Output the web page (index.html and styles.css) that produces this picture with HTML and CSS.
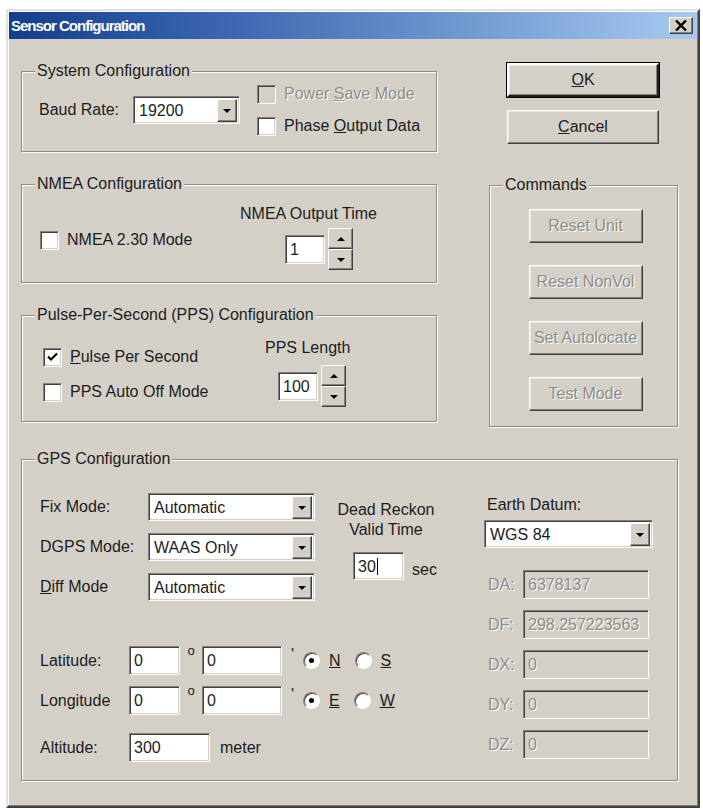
FILE: index.html
```html
<!DOCTYPE html>
<html lang="en">
<head>
    <meta charset="UTF-8">
    <meta name="viewport" content="width=device-width, initial-scale=1.0">
    <title>Sensor Configuration</title>
    <link rel="stylesheet" href="styles.css">
</head>
<body>
    <div class="window">
        <div class="titlebar">
            <span class="title">Sensor Configuration</span>
            <span class="close">
                <svg width="12" height="11" viewBox="0 0 12 11"><path d="M1 0.5 L11 10.5 M11 0.5 L1 10.5" stroke="#000" stroke-width="2.4"/></svg>
            </span>
        </div>

        <div class="client">
            <div class="top">
                <div class="left-col">
                    <fieldset class="group sys">
                        <legend>System Configuration</legend>
                        <div class="sys-row">
                            <span class="lbl baud-lbl">Baud Rate:</span>
                            <div class="combo baud"><span class="val">19200</span><span class="drop"><i></i></span></div>
                            <div class="checks">
                                <div class="check disabled"><span class="box"></span><span>Power <u>S</u>ave Mode</span></div>
                                <div class="check"><span class="box"></span><span>Phase <u>O</u>utput Data</span></div>
                            </div>
                        </div>
                    </fieldset>

                    <fieldset class="group nmea">
                        <legend>NMEA Configuration</legend>
                        <div class="nmea-row">
                            <div class="check nmea-check"><span class="box"></span><span>NMEA 2.30 Mode</span></div>
                            <div class="spin-block nmea-spin">
                                <span class="lbl">NMEA Output Time</span>
                                <div class="spinner">
                                    <div class="edit small">1</div>
                                    <div class="updown"><span class="up"><i></i></span><span class="down"><i></i></span></div>
                                </div>
                            </div>
                        </div>
                    </fieldset>

                    <fieldset class="group pps">
                        <legend>Pulse-Per-Second (PPS) Configuration</legend>
                        <div class="pps-row">
                            <div class="pps-checks">
                                <div class="check"><span class="box checked">
                                    <svg width="11" height="10" viewBox="0 0 11 10"><path d="M1 4.5 L4 7.5 L10 1.5" fill="none" stroke="#000" stroke-width="2.2"/></svg>
                                </span><span><u>P</u>ulse Per Second</span></div>
                                <div class="check"><span class="box"></span><span>PPS Auto Off Mode</span></div>
                            </div>
                            <div class="spin-block pps-spin">
                                <span class="lbl">PPS Length</span>
                                <div class="spinner">
                                    <div class="edit small">100</div>
                                    <div class="updown"><span class="up"><i></i></span><span class="down"><i></i></span></div>
                                </div>
                            </div>
                        </div>
                    </fieldset>
                </div>

                <div class="right-col">
                    <button class="btn default"><u>O</u>K</button>
                    <button class="btn cancel"><u>C</u>ancel</button>
                    <fieldset class="group commands">
                        <legend>Commands</legend>
                        <div class="cmd-list">
                            <button class="btn cmd" disabled>Reset Unit</button>
                            <button class="btn cmd" disabled>Reset NonVol</button>
                            <button class="btn cmd" disabled>Set Autolocate</button>
                            <button class="btn cmd" disabled>Test Mode</button>
                        </div>
                    </fieldset>
                </div>
            </div>

            <fieldset class="group gps">
                <legend>GPS Configuration</legend>
                <div class="gps-body">
                    <div class="gps-left">
                        <div class="modes">
                            <div class="mode-grid">
                                <span class="lbl">Fix Mode:</span>
                                <div class="combo wide"><span class="val">Automatic</span><span class="drop"><i></i></span></div>
                                <span class="lbl">DGPS Mode:</span>
                                <div class="combo wide"><span class="val">WAAS Only</span><span class="drop"><i></i></span></div>
                                <span class="lbl"><u>D</u>iff Mode</span>
                                <div class="combo wide"><span class="val">Automatic</span><span class="drop"><i></i></span></div>
                            </div>
                            <div class="dead-reckon">
                                <span class="lbl">Dead Reckon<br>Valid Time</span>
                                <div class="dr-row">
                                    <div class="edit dr">30<span class="caret"></span></div>
                                    <span class="lbl sec">sec</span>
                                </div>
                            </div>
                        </div>

                        <div class="coords">
                            <div class="coord-row">
                                <span class="lbl coord-lbl">Latitude:</span>
                                <div class="edit deg">0</div>
                                <span class="mark degree">o</span>
                                <div class="edit min">0</div>
                                <span class="mark minute">'</span>
                                <span class="radio on"></span><span class="lbl rlbl"><u>N</u></span>
                                <span class="radio"></span><span class="lbl rlbl"><u>S</u></span>
                            </div>
                            <div class="coord-row">
                                <span class="lbl coord-lbl">Longitude</span>
                                <div class="edit deg">0</div>
                                <span class="mark degree">o</span>
                                <div class="edit min">0</div>
                                <span class="mark minute">'</span>
                                <span class="radio on"></span><span class="lbl rlbl"><u>E</u></span>
                                <span class="radio"></span><span class="lbl rlbl"><u>W</u></span>
                            </div>
                            <div class="coord-row alt-row">
                                <span class="lbl coord-lbl">Altitude:</span>
                                <div class="edit alt">300</div>
                                <span class="lbl meter">meter</span>
                            </div>
                        </div>
                    </div>

                    <div class="gps-right">
                        <span class="lbl datum-lbl">Earth Datum:</span>
                        <div class="combo datum"><span class="val">WGS 84</span><span class="drop"><i></i></span></div>
                        <div class="datum-rows">
                            <div class="drow"><span class="lbl off">DA:</span><div class="edit ro">6378137</div></div>
                            <div class="drow"><span class="lbl off">DF:</span><div class="edit ro">298.257223563</div></div>
                            <div class="drow"><span class="lbl off">DX:</span><div class="edit ro">0</div></div>
                            <div class="drow"><span class="lbl off">DY:</span><div class="edit ro">0</div></div>
                            <div class="drow"><span class="lbl off">DZ:</span><div class="edit ro">0</div></div>
                        </div>
                    </div>
                </div>
            </fieldset>
        </div>
    </div>
</body>
</html>
```

FILE: styles.css
```css
* { box-sizing: border-box; }
body { margin: 0; background: #fff; font-family: "Liberation Sans", Arial, sans-serif; font-size: 16px; color: #1c1c1c; }

/* window frame */
.window { margin: 9px 0 0 6px; width: 694px; height: 799px; background: #d4d0c8; padding: 1px;
    border: 2px solid; border-color: #e4e2dc #404040 #404040 #e4e2dc; box-shadow: inset -1px -1px 0 #808080, inset 1px 1px 0 #fff; }
.titlebar { height: 27px; display: flex; align-items: center; justify-content: space-between; padding: 0 4px 0 2px;
    background: linear-gradient(to right, #123e8c 0%, #3f6cb4 35%, #a6caf0 100%); }
.title { color: #fff; font-weight: bold; font-size: 15px; letter-spacing: -1px; }
.close { width: 24px; height: 17px; display: flex; align-items: center; justify-content: center; background: #d4d0c8;
    border: 1px solid; border-color: #fff #404040 #404040 #fff; box-shadow: inset -1px -1px 0 #808080; }

.client { padding: 24px 19px 0 12px; }
.top { display: flex; gap: 52px; }
.left-col { width: 416px; display: flex; flex-direction: column; gap: 24px; }
.right-col { width: 189px; display: flex; flex-direction: column; }

/* group boxes */
.group { margin: 0; padding: 0; min-width: 0; border: 1px solid #8c8a86; box-shadow: inset 1px 1px 0 #fff, 1px 1px 0 #fff; }
.group legend { margin-left: 13px; padding: 0 2px; line-height: 16px; background: #d4d0c8; }
.sys { height: 89px; }
.nmea { height: 107px; }
.pps { height: 115px; }
.commands { height: 250px; margin-top: 33px; }
.gps { height: 330px; margin-top: 24px; }

.lbl { white-space: nowrap; }
.off, .disabled { color: #8e8c88; text-shadow: 1px 1px 0 #fff; }

/* sunken field */
.edit, .combo { background: #fff; height: 29px; border: 1px solid; border-color: #808080 #fff #fff #808080;
    box-shadow: inset 1px 1px 0 #404040, inset -1px -1px 0 #d4d0c8; padding: 2px 4px; line-height: 23px; white-space: nowrap; overflow: hidden; }
.edit.ro { background: #d4d0c8; color: #8e8c88; text-shadow: 1px 1px 0 #fff; }

.combo { display: flex; justify-content: space-between; padding: 2px 2px 2px 5px; }
.drop { width: 20px; height: 23px; background: #d4d0c8; border: 1px solid; border-color: #fff #404040 #404040 #fff;
    box-shadow: inset -1px -1px 0 #808080; display: flex; align-items: center; justify-content: center; }
.drop i, .updown i { width: 0; height: 0; border-left: 4px solid transparent; border-right: 4px solid transparent; border-top: 4px solid #000; }

/* buttons */
.btn { font: inherit; color: #1c1c1c; background: #d4d0c8; height: 34px; border: 1px solid; border-color: #fff #404040 #404040 #fff;
    box-shadow: inset -1px -1px 0 #808080, inset 1px 1px 0 #e8e6e0; padding: 0; }
.btn.default { outline: 1px solid #000; outline-offset: 0; border-width: 2px; border-color: #fff #202020 #202020 #fff; }
.right-col .default, .right-col .cancel { width: 152px; margin-left: 18px; }
.cancel { margin-top: 13px; }
.btn:disabled { color: #8e8c88; text-shadow: 1px 1px 0 #fff; }
.cmd-list { display: flex; flex-direction: column; align-items: center; gap: 22px; padding: 16px 0 0 4px; }
.cmd { width: 114px; }

/* checkboxes and radios */
.check { display: flex; align-items: center; gap: 8px; height: 20px; white-space: nowrap; }
.box { width: 19px; height: 19px; flex: none; background: #fff; border: 1px solid; border-color: #808080 #fff #fff #808080;
    box-shadow: inset 1px 1px 0 #404040, inset -1px -1px 0 #d4d0c8; display: flex; align-items: center; justify-content: center; }
.disabled .box { background: #d4d0c8; }
.radio { width: 17px; height: 17px; flex: none; border-radius: 50%; background: #fff; border: 1px solid; border-color: #808080 #fff #fff #808080;
    box-shadow: inset 1px 1px 0 #404040; display: flex; align-items: center; justify-content: center; }
.radio.on::after { content: ""; width: 5px; height: 5px; border-radius: 50%; background: #000; }

/* system */
.sys-row { display: flex; align-items: center; padding: 0 0 0 17px; height: 62px; }
.baud-lbl { width: 94px; }
.baud { width: 107px; height: 28px; }
.checks { display: flex; flex-direction: column; gap: 12px; margin-left: 17px; }

/* spinners */
.spin-block { display: flex; flex-direction: column; }
.spin-block .lbl { line-height: 18px; }
.spinner { display: flex; align-items: center; gap: 3px; }
.edit.small { width: 40px; }
.updown { width: 25px; height: 42px; display: flex; flex-direction: column; }
.updown span { flex: 1; background: #d4d0c8; border: 1px solid; border-color: #fff #404040 #404040 #fff;
    box-shadow: inset -1px -1px 0 #808080; display: flex; align-items: center; justify-content: center; }
.updown .up i { border-top: 0; border-bottom: 4px solid #000; }

/* nmea */
.nmea-row { display: flex; padding-left: 18px; }
.nmea-check { width: 200px; margin-top: 38px; }
.nmea-spin { padding-top: 13px; }
.nmea-spin .spinner { margin: 5px 0 0 45px; }

/* pps */
.pps-row { display: flex; padding-left: 21px; }
.pps-checks { width: 222px; display: flex; flex-direction: column; gap: 15px; padding-top: 24px; }
.pps-spin { padding-top: 16px; }
.pps-spin .spinner { margin: 8px 0 0 13px; }

/* gps */
.gps-body { display: flex; padding-left: 18px; }
.gps-left { width: 444px; }
.modes { display: flex; padding-top: 26px; }
.mode-grid { display: grid; grid-template-columns: 108px 167px; row-gap: 12px; align-items: center; }
.combo.wide { height: 28px; }
.dead-reckon { width: 102px; margin-left: 20px; padding-top: 7px; display: flex; flex-direction: column; }
.dead-reckon > .lbl { text-align: center; line-height: 20px; }
.dr-row { display: flex; align-items: center; margin: 12px 0 0 18px; }
.edit.dr { width: 56px; height: 28px; }
.caret { display: inline-block; width: 1px; height: 17px; background: #000; vertical-align: -3px; margin-left: 1px; }
.sec { margin: 8px 0 0 8px; }

.coords { margin-top: 45px; display: flex; flex-direction: column; gap: 11px; }
.coord-row { display: flex; align-items: center; }
.coord-lbl { width: 89px; }
.edit.deg { width: 51px; }
.edit.min { width: 80px; }
.mark { width: 22px; text-align: center; }
.degree { font-size: 13px; align-self: flex-start; margin-top: -3px; }
.minute { width: 21px; align-self: flex-start; }
.rlbl { margin: 0 14px 0 9px; }
.alt-row { margin-top: 7px; }
.edit.alt { width: 81px; }
.meter { margin-left: 10px; }

.gps-right { width: 169px; margin-left: 0; padding-top: 29px; display: flex; flex-direction: column; }
.datum-lbl { line-height: 18px; padding-left: 3px; }
.combo.datum { margin-top: 6px; height: 28px; }
.datum-rows { margin-top: 22px; display: flex; flex-direction: column; gap: 11px; }
.drow { display: flex; align-items: center; padding-left: 4px; }
.drow .lbl { width: 35px; }
.drow .edit { width: 126px; }
```
